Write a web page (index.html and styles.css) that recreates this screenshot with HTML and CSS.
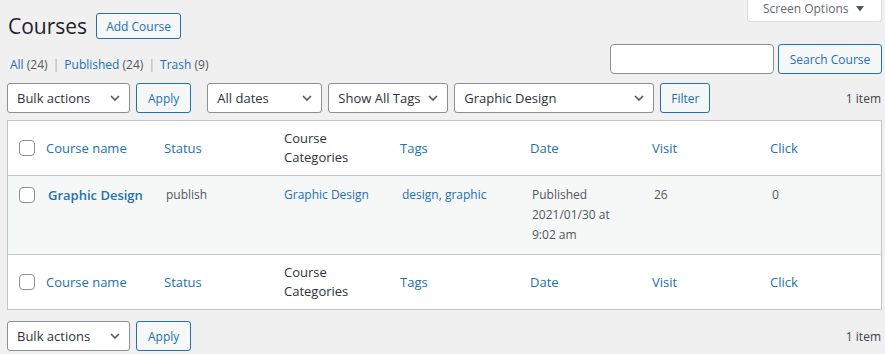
FILE: index.html
```html
<!DOCTYPE html>
<html>
    <head>
        <title>Courses</title>
        <link rel="stylesheet" href="styles.css">
    </head>
    <body>
        <div class="wrap">
            <div class="top-row">
                <div class="title-row">
                    <h1>Courses</h1>
                    <a class="button page-title-action" href="#">Add Course</a>
                </div>
                <button class="screen-options" type="button">
                    Screen Options
                    <svg width="8" height="6" viewBox="0 0 8 6"><polygon points="0,0 8,0 4,5.5" fill="#50575e"/></svg>
                </button>
            </div>

            <div class="views-row">
                <ul class="subsubsub">
                    <li><a href="#">All <span class="count">(24)</span></a> <span class="sep">|</span></li>
                    <li><a href="#">Published <span class="count">(24)</span></a> <span class="sep">|</span></li>
                    <li><a href="#">Trash <span class="count">(9)</span></a></li>
                </ul>
                <form class="search-box">
                    <input type="search" class="search-input">
                    <button class="button" type="button">Search Course</button>
                </form>
            </div>

            <div class="tablenav">
                <div class="actions bulk">
                    <div class="select bulk-select">
                        <span>Bulk actions</span>
                        <svg width="10" height="6" viewBox="0 0 10 6"><polyline points="1,1 5,5 9,1" fill="none" stroke="#50575e" stroke-width="1.6"/></svg>
                    </div>
                    <button class="button" type="button">Apply</button>
                </div>
                <div class="actions filters">
                    <div class="select date-select">
                        <span>All dates</span>
                        <svg width="10" height="6" viewBox="0 0 10 6"><polyline points="1,1 5,5 9,1" fill="none" stroke="#50575e" stroke-width="1.6"/></svg>
                    </div>
                    <div class="select tag-select">
                        <span>Show All Tags</span>
                        <svg width="10" height="6" viewBox="0 0 10 6"><polyline points="1,1 5,5 9,1" fill="none" stroke="#50575e" stroke-width="1.6"/></svg>
                    </div>
                    <div class="select category-select">
                        <span>Graphic Design</span>
                        <svg width="10" height="6" viewBox="0 0 10 6"><polyline points="1,1 5,5 9,1" fill="none" stroke="#50575e" stroke-width="1.6"/></svg>
                    </div>
                    <button class="button filter-button" type="button">Filter</button>
                </div>
                <div class="displaying-num">1 item</div>
            </div>

            <table class="widefat">
                <colgroup>
                    <col class="col-check">
                    <col class="col-name">
                    <col class="col-status">
                    <col class="col-categories">
                    <col class="col-tags">
                    <col class="col-date">
                    <col class="col-visit">
                    <col class="col-click">
                </colgroup>
                <thead>
                    <tr>
                        <td class="check-column"><span class="checkbox"></span></td>
                        <th><a href="#">Course name</a></th>
                        <th><a href="#">Status</a></th>
                        <th class="plain">Course Categories</th>
                        <th><a href="#">Tags</a></th>
                        <th><a href="#">Date</a></th>
                        <th><a href="#">Visit</a></th>
                        <th><a href="#">Click</a></th>
                    </tr>
                </thead>
                <tbody>
                    <tr>
                        <td class="check-column"><span class="checkbox"></span></td>
                        <td class="title"><a href="#"><strong>Graphic Design</strong></a></td>
                        <td>publish</td>
                        <td class="categories"><a href="#">Graphic Design</a></td>
                        <td><a href="#">design</a>, <a href="#">graphic</a></td>
                        <td>Published<br>2021/01/30 at<br>9:02 am</td>
                        <td>26</td>
                        <td>0</td>
                    </tr>
                </tbody>
                <tfoot>
                    <tr>
                        <td class="check-column"><span class="checkbox"></span></td>
                        <th><a href="#">Course name</a></th>
                        <th><a href="#">Status</a></th>
                        <th class="plain">Course Categories</th>
                        <th><a href="#">Tags</a></th>
                        <th><a href="#">Date</a></th>
                        <th><a href="#">Visit</a></th>
                        <th><a href="#">Click</a></th>
                    </tr>
                </tfoot>
            </table>

            <div class="tablenav bottom">
                <div class="actions bulk">
                    <div class="select bulk-select">
                        <span>Bulk actions</span>
                        <svg width="10" height="6" viewBox="0 0 10 6"><polyline points="1,1 5,5 9,1" fill="none" stroke="#50575e" stroke-width="1.6"/></svg>
                    </div>
                    <button class="button" type="button">Apply</button>
                </div>
                <div class="displaying-num">1 item</div>
            </div>
        </div>
    </body>
</html>
```

FILE: styles.css
```css
body {
    margin: 0;
    background-color: #f0f0f1;
    font-family: "Open Sans", Arial, sans-serif;
    font-size: 12px;
    color: #3c434a;
}

a {
    color: #2271b1;
    text-decoration: none;
}

.wrap {
    padding: 0 3px 0 7px;
}

.top-row {
    display: flex;
    justify-content: space-between;
    align-items: flex-start;
    height: 39px;
}

.title-row {
    display: flex;
    align-items: center;
    margin-top: 13px;
    padding-left: 1px;
}

h1 {
    margin: 0;
    font-size: 21px;
    font-weight: 400;
    line-height: 26px;
    color: #1d2327;
}

.button {
    display: inline-flex;
    align-items: center;
    justify-content: center;
    box-sizing: border-box;
    height: 30px;
    margin: 0;
    padding: 0 10px;
    border: 1px solid #2271b1;
    border-radius: 3px;
    background-color: #f6f7f7;
    color: #2271b1;
    font-family: inherit;
    font-size: 12px;
    white-space: nowrap;
    cursor: pointer;
}

.page-title-action {
    height: 26px;
    margin-left: 9px;
    padding: 0 9px;
}

.screen-options {
    display: flex;
    align-items: center;
    gap: 8px;
    box-sizing: border-box;
    width: 135px;
    height: 22px;
    padding: 0 0 4px 15px;
    border: 1px solid #dcdcde;
    border-top: none;
    border-radius: 0 0 4px 4px;
    background-color: #fff;
    color: #646970;
    font-family: inherit;
    font-size: 12px;
}

.views-row {
    display: flex;
    justify-content: space-between;
    align-items: flex-start;
    height: 30px;
    margin-top: 5px;
}

.subsubsub {
    display: flex;
    margin: 0;
    padding: 12px 0 0 3px;
    list-style: none;
    line-height: 18px;
    color: #646970;
}

.subsubsub li {
    margin-right: 5px;
}

.subsubsub .count {
    color: #50575e;
}

.subsubsub .sep {
    margin-left: 2px;
    color: #a7aaad;
}

.search-box {
    display: flex;
    gap: 4px;
    margin: 0;
}

.search-input {
    box-sizing: border-box;
    width: 164px;
    height: 30px;
    margin: 0;
    border: 1px solid #8c8f94;
    border-radius: 4px;
    background-color: #fff;
}

.search-box .button {
    width: 104px;
    padding: 0;
}

.tablenav {
    display: flex;
    align-items: center;
    height: 30px;
    margin-top: 9px;
}

.tablenav.bottom {
    margin-top: 11px;
}

.actions {
    display: flex;
    gap: 6px;
}

.bulk {
    margin-right: 16px;
}

.select {
    display: flex;
    justify-content: space-between;
    align-items: center;
    box-sizing: border-box;
    height: 30px;
    padding: 0 9px 0 9px;
    border: 1px solid #8c8f94;
    border-radius: 3px;
    background-color: #fff;
    color: #2c3338;
    font-size: 13px;
}

.bulk-select {
    width: 123px;
}

.date-select {
    width: 115px;
}

.tag-select {
    width: 120px;
}

.category-select {
    width: 200px;
}

.actions .button {
    padding: 0 11px;
}

.actions .filter-button {
    width: 50px;
    padding: 0;
}

.displaying-num {
    margin-left: auto;
    padding-right: 1px;
    color: #3c434a;
}

.widefat {
    box-sizing: border-box;
    width: 100%;
    margin-top: 7px;
    border: 1px solid #c3c4c7;
    border-spacing: 0;
    table-layout: fixed;
    background-color: #fff;
}

.col-check { width: 28px; }
.col-name { width: 118px; }
.col-status { width: 120px; }
.col-categories { width: 116px; }
.col-tags { width: 130px; }
.col-date { width: 122px; }
.col-visit { width: 118px; }

.widefat th,
.widefat thead td,
.widefat tfoot td {
    padding: 8px 10px;
    height: 38px;
    font-size: 13px;
    font-weight: 400;
    line-height: 19px;
    text-align: left;
    vertical-align: middle;
    color: #2c3338;
}

.widefat thead th,
.widefat thead td {
    border-bottom: 1px solid #c3c4c7;
}

.widefat tfoot th,
.widefat tfoot td {
    border-top: 1px solid #c3c4c7;
}

.widefat .check-column {
    padding: 0 0 0 11px;
}

.widefat tbody td {
    padding: 9px 10px 9px 12px;
    background-color: #f6f7f7;
    font-size: 12px;
    line-height: 20px;
    vertical-align: top;
    color: #50575e;
}

.widefat tbody .check-column {
    padding: 11px 0 0 11px;
}

.widefat tbody td.categories {
    padding-left: 10px;
}

.widefat .title strong {
    font-size: 13px;
    font-weight: 600;
}

.checkbox {
    display: block;
    box-sizing: border-box;
    width: 16px;
    height: 16px;
    border: 1px solid #8c8f94;
    border-radius: 4px;
    background-color: #fff;
}
```
